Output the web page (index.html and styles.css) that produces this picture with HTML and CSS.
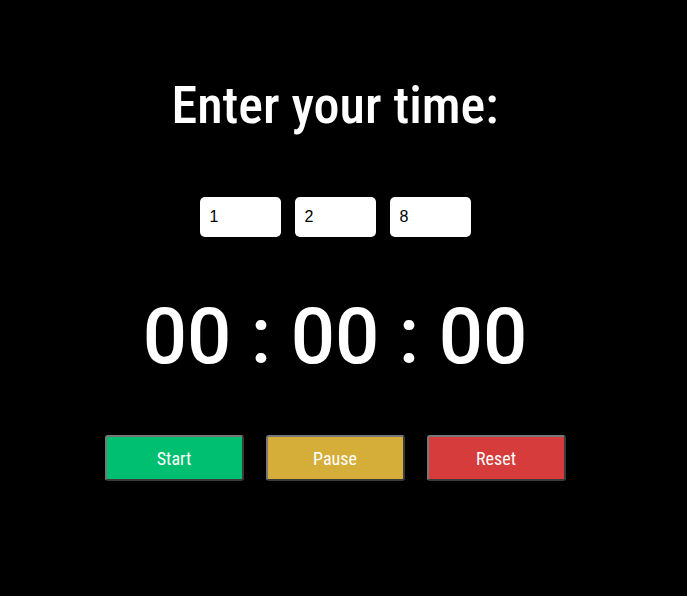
FILE: index.html
```html
<!DOCTYPE html>
<html lang="en">
<head>
<meta charset="utf-8">
<title>Timer</title>
<link rel="stylesheet" href="styles.css">
</head>
<body>
<main class="app">
  <h1 class="title">Enter your time:</h1>
  <div class="inputs">
    <input class="field" type="text" value="1">
    <input class="field" type="text" value="2">
    <input class="field" type="text" value="8">
  </div>
  <div class="clock">00 : 00 : 00</div>
  <div class="buttons">
    <button class="btn btn-start">Start</button>
    <button class="btn btn-pause">Pause</button>
    <button class="btn btn-reset">Reset</button>
  </div>
</main>
</body>
</html>
```
FILE: styles.css
```css
html, body {
  margin: 0;
  padding: 0;
  background: #000;
  color: #fff;
}
.app {
  width: 670px;
  display: flex;
  flex-direction: column;
  align-items: center;
  padding-top: 80px;
}
.title {
  margin: 0;
  font-family: Roboto, sans-serif;
  font-stretch: condensed;
  font-weight: 500;
  font-size: 52px;
  line-height: 1;
}
.inputs {
  display: flex;
  gap: 14px;
  margin-top: 65px;
}
.field {
  box-sizing: border-box;
  width: 81px;
  height: 40px;
  border: none;
  border-radius: 5px;
  background: #fff;
  color: #000;
  padding: 0 10px;
  font-family: "Liberation Sans", Arial, sans-serif;
  font-size: 16px;
  outline: none;
}
.clock {
  margin-top: 61px;
  font-family: Roboto, sans-serif;
  font-weight: 500;
  font-size: 78px;
  line-height: 1;
  white-space: nowrap;
}
.buttons {
  display: flex;
  gap: 22px;
  margin-top: 59px;
}
.btn {
  box-sizing: border-box;
  width: 139px;
  height: 46px;
  border-style: solid;
  border-width: 2px;
  border-color: #777 #3a3a3a #3a3a3a #777;
  border-radius: 3px;
  color: #fff;
  font-family: Roboto, sans-serif;
  font-stretch: condensed;
  font-size: 18px;
  padding: 0;
}
.btn-start { background: #00bf70; }
.btn-pause { background: #d4ae38; }
.btn-reset { background: #d53c3b; }
```
